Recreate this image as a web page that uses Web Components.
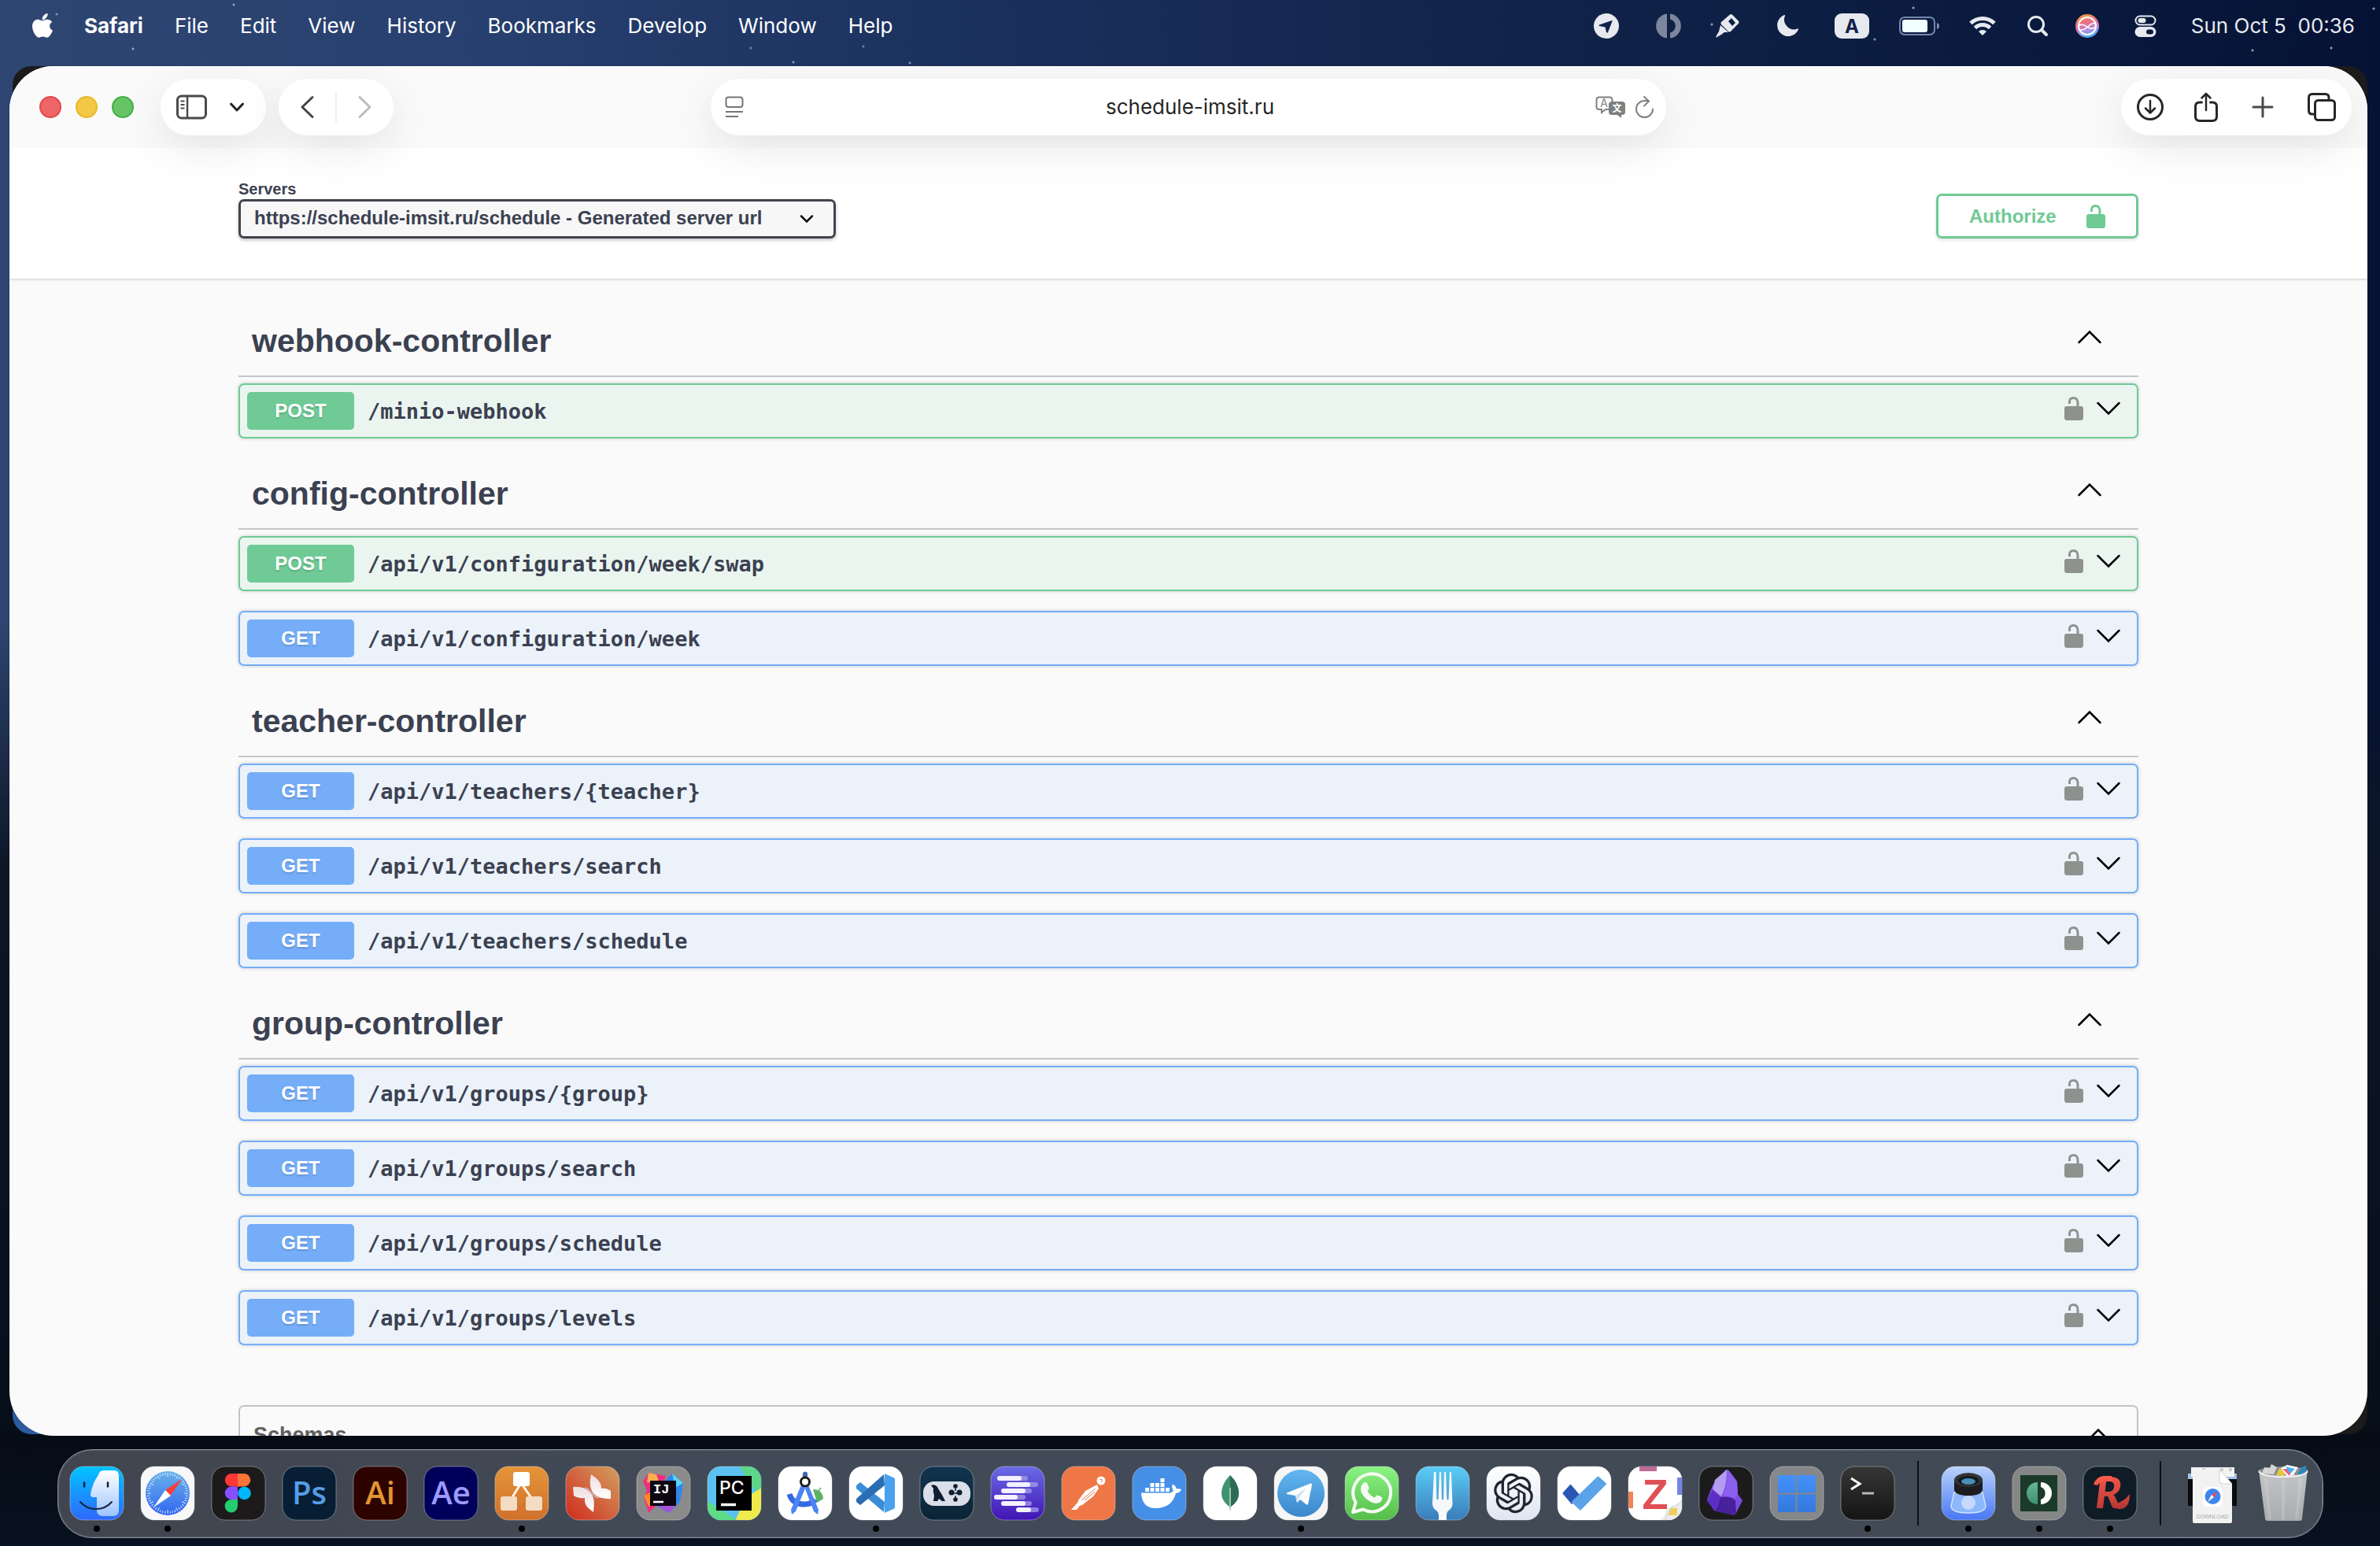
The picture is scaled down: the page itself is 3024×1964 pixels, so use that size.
<!DOCTYPE html>
<html lang="en">
<head>
<meta charset="utf-8">
<title>schedule-imsit.ru</title>
<style>
  html, body { margin: 0; height: 100%; }
  body { font-family: Inter, "Liberation Sans", sans-serif; overflow: hidden; }
</style>
</head>
<body>
<mac-desktop>
  <mac-menubar slot="menubar"></mac-menubar>
  <safari-window>
    <browser-toolbar slot="toolbar"></browser-toolbar>
    <swagger-servers></swagger-servers>
    <swagger-main>
      <api-section name="webhook-controller">
        <api-operation method="post" path="/minio-webhook"></api-operation>
      </api-section>
      <api-section name="config-controller">
        <api-operation method="post" path="/api/v1/configuration/week/swap"></api-operation>
        <api-operation method="get" path="/api/v1/configuration/week"></api-operation>
      </api-section>
      <api-section name="teacher-controller">
        <api-operation method="get" path="/api/v1/teachers/{teacher}"></api-operation>
        <api-operation method="get" path="/api/v1/teachers/search"></api-operation>
        <api-operation method="get" path="/api/v1/teachers/schedule"></api-operation>
      </api-section>
      <api-section name="group-controller">
        <api-operation method="get" path="/api/v1/groups/{group}"></api-operation>
        <api-operation method="get" path="/api/v1/groups/search"></api-operation>
        <api-operation method="get" path="/api/v1/groups/schedule"></api-operation>
        <api-operation method="get" path="/api/v1/groups/levels"></api-operation>
      </api-section>
      <schema-panel>Schemas</schema-panel>
    </swagger-main>
  </safari-window>
  <mac-dock slot="dock">
    <dock-item icon="finder" running></dock-item>
    <dock-item icon="safari" running></dock-item>
    <dock-item icon="figma"></dock-item>
    <dock-item icon="photoshop"></dock-item>
    <dock-item icon="illustrator"></dock-item>
    <dock-item icon="aftereffects"></dock-item>
    <dock-item icon="drawio" running></dock-item>
    <dock-item icon="ribbon"></dock-item>
    <dock-item icon="intellij"></dock-item>
    <dock-item icon="pycharm"></dock-item>
    <dock-item icon="androidstudio"></dock-item>
    <dock-item icon="vscode" running></dock-item>
    <dock-item icon="dbclient"></dock-item>
    <dock-item icon="bars"></dock-item>
    <dock-item icon="postman"></dock-item>
    <dock-item icon="docker"></dock-item>
    <dock-item icon="mongodb"></dock-item>
    <dock-item icon="telegram" running></dock-item>
    <dock-item icon="whatsapp"></dock-item>
    <dock-item icon="fork"></dock-item>
    <dock-item icon="chatgpt"></dock-item>
    <dock-item icon="todo"></dock-item>
    <dock-item icon="zotero"></dock-item>
    <dock-item icon="obsidian"></dock-item>
    <dock-item icon="windows"></dock-item>
    <dock-item icon="terminal" running></dock-item>
    <dock-separator></dock-separator>
    <dock-item icon="preview" running></dock-item>
    <dock-item icon="split" running></dock-item>
    <dock-item icon="redis" running></dock-item>
    <dock-separator></dock-separator>
    <dock-item icon="downloads"></dock-item>
    <dock-item icon="trash"></dock-item>
  </mac-dock>
</mac-desktop>

<script>
function define(name, render) {
  customElements.define(name, class extends HTMLElement {
    connectedCallback() {
      if (this.shadowRoot) return;
      this.attachShadow({ mode: "open" }).innerHTML = render(this);
    }
  });
}

const BUTTON_RESET = `button{appearance:none;border:0;background:none;padding:0;margin:0;font:inherit;color:inherit;display:block;cursor:pointer} svg{display:block;overflow:visible}`;

/* ---------- desktop ---------- */
define("mac-desktop", () => `
<style>
  :host{display:flex;flex-direction:column;height:100vh;overflow:hidden;
    background:
      radial-gradient(circle at 297px 6px,#8fa0c0 0 1px,transparent 2px),
      radial-gradient(circle at 72px 18px,#8090b5 0 1px,transparent 2px),
      radial-gradient(circle at 169px 62px,#93a3c4 0 1px,transparent 2px),
      radial-gradient(circle at 954px 61px,#6f82aa 0 1px,transparent 2px),
      radial-gradient(circle at 1097px 59px,#6f82aa 0 1px,transparent 2px),
      radial-gradient(circle at 1008px 79px,#8698bd 0 1px,transparent 2px),
      radial-gradient(circle at 1156px 80px,#7f90b5 0 1px,transparent 2px),
      radial-gradient(circle at 2175px 31px,#8c9cb8 0 1px,transparent 2px),
      radial-gradient(circle at 2431px 10px,#8c9cb8 0 1px,transparent 2px),
      radial-gradient(circle at 2382px 50px,#7f8fae 0 1px,transparent 2px),
      radial-gradient(circle at 2862px 64px,#8c9cb8 0 1px,transparent 2px),
      radial-gradient(circle at 2962px 61px,#8c9cb8 0 1px,transparent 2px),
      radial-gradient(circle at 3016px 11px,#8c9cb8 0 1px,transparent 2px),
      linear-gradient(180deg,transparent 0,transparent 92%,#060c16 93%,#081220 100%),
      linear-gradient(180deg,transparent 0,transparent 40%,#0c1626 56%,#070f1b 92%),
      linear-gradient(90deg,#2f4672 0,#284070 20%,#1b315e 40%,#12244b 62%,#0a1a3e 85%,#051236 100%)}
  main{flex:1;min-height:0;margin:18px 16px 0 12px;display:flex}
  footer{display:flex;justify-content:center;padding:17px 0 10px}
</style>
<slot name="menubar"></slot>
<main><slot></slot></main>
<footer><slot name="dock"></slot></footer>`);

/* ---------- menu bar ---------- */
define("mac-menubar", () => `
<style>
  :host{display:flex;justify-content:space-between;align-items:center;height:66px;padding:0 32px 0 41px;color:#fff;font-size:26px;line-height:32px}
  ${BUTTON_RESET}
  nav{display:flex;align-items:center;gap:40px}
  nav button:first-child + button{font-weight:700}
  .status{display:flex;align-items:center;gap:32px;color:#e6e9ee}
  time{white-space:pre}
</style>
<nav aria-label="Menu bar">
  <button aria-label="Apple"><svg width="26" height="32" viewBox="0 0 26 32" fill="#fff"><path d="M19.600 0c.2 2.300-.8 4.300-2 5.700-1.200 1.400-3.200 2.500-5 2.300-.2-2.200.9-4.300 2-5.500C15.900 1.100 18 .1 19.600 0zM25.200 10.900c-1.800 1.100-3.100 2.700-3.100 5 0 2.700 1.600 4.700 3.900 5.600-.6 1.900-1.500 3.700-2.700 5.400-1.300 1.900-2.600 3.800-4.700 3.800-2 0-2.700-1.200-5.100-1.200-2.400 0-3.200 1.200-5.100 1.200-2.100 0-3.600-2-4.900-3.900C.9 23.100-.7 17.500.3 13.400 1.300 9.700 4.200 7.800 7.100 7.800c2.200 0 4.100 1.400 5.700 1.400 1.500 0 3.700-1.600 6.200-1.500 2.400 0 4.700 1.100 6.200 3.200z"/></svg></button>
  <button>Safari</button><button>File</button><button>Edit</button><button>View</button><button>History</button><button>Bookmarks</button><button>Develop</button><button>Window</button><button>Help</button>
</nav>
<div class="status">
  <svg width="54" height="32" viewBox="-27 -16 54 32"><circle r="16" fill="#e6e9ee"/><path d="M7-7-9-1.500q-1 .8 0 1.500L-1.500 1.500 0 8q1 1 2 0L7.500-6Q7.800-7.500 7-7z" fill="#12224a"/></svg>
  <svg width="40" height="32" viewBox="-20 -16 40 32" fill="#7d869c"><path d="M-2-15.500a15.600 15.600 0 0 0 0 31zM2-15.500a15.600 15.600 0 0 1 0 31v-7a8.700 8.700 0 0 0 0-17z"/></svg>
  <svg width="46" height="32" viewBox="-23 -16 46 32" fill="#e6e9ee"><path fill-rule="evenodd" d="M3-14.500q1.500-1 3 .3l8 8q1.300 1.500 0 3L4 7q-1.500 1.200-3 0L-8-2q-1.200-1.500 0-3zM1-6l5 6 4-4-5-6zM-9-1 1 8-4 8-8 11-15 15-14 12-11 7-10 3z"/></svg>
  <svg width="42" height="32" viewBox="-21 -16 42 32" fill="#e6e9ee"><path d="M-4-14A14 14 0 1 0 14 4.500Q15 3 13 3.500A12.500 12.500 0 0 1-3-13Q-3-14.500-4-14z"/></svg>
  <svg width="58" height="32" viewBox="-29 -16 58 32"><rect x="-22" y="-16" width="44" height="32" rx="9" fill="#e6e9ee"/><text y="9" text-anchor="middle" font-size="24" font-weight="700" fill="#12224a">A</text></svg>
  <svg width="50" height="32" viewBox="-25 -16 50 32"><rect x="-25" y="-11" width="44" height="22" rx="6" fill="none" stroke="#7486ab" stroke-width="2"/><rect x="-22" y="-8" width="32" height="16" rx="3" fill="#f0ffff"/><path d="M22-4q3 1 3 4t-3 4z" fill="#8290b0"/></svg>
  <svg width="46" height="32" viewBox="-23 -16 46 32" fill="none" stroke="#e6e9ee" stroke-width="5"><path d="M-15-3.500a21.500 21.500 0 0 1 30 0M-9.500 2.500a13.500 13.500 0 0 1 19 0"/><path d="M0 12-5 7a7 7 0 0 1 10 0z" fill="#e6e9ee" stroke="none"/></svg>
  <svg width="30" height="32" viewBox="-15 -16 30 32" fill="none" stroke="#e6e9ee" stroke-width="3" stroke-linecap="round"><circle cx="-2" cy="-2" r="9.500"/><path d="m5 5 6 6" stroke-width="4"/></svg>
  <svg width="32" height="32" viewBox="-16 -16 32 32"><defs><linearGradient id="a" x1=".2" y1="0" x2=".5" y2="1"><stop stop-color="#f2a33a"/><stop offset=".4" stop-color="#ea6d88"/><stop offset=".7" stop-color="#b48ae0"/><stop offset="1" stop-color="#45b4f5"/></linearGradient></defs><circle r="15" fill="url(#a)"/><circle r="11" fill="none" stroke="#fff" stroke-width="2"/><path d="M-11 0C-6-5 0 2 4 3S11 1 11-1 7-5 3-1-6 7-10 4" fill="none" stroke="#fff" stroke-width="1.500"/></svg>
  <svg width="52" height="32" viewBox="-26 -16 52 32" fill="none" stroke="#e6e9ee" stroke-width="2"><rect x="-12.500" y="-12.500" width="25" height="11" rx="5.500"/><rect x="-9.500" y="-10" width="10" height="6" rx="3" fill="#e6e9ee" stroke="none"/><rect x="-12.500" y="2" width="25" height="11" rx="5.500" fill="#e6e9ee"/><rect x="1" y="4.500" width="9" height="6" rx="3" fill="#0a1a3e" stroke="none"/></svg>
  <time>Sun Oct 5  00:36</time>
</div>`);

/* ---------- browser window ---------- */
define("safari-window", () => `
<style>
  :host{position:relative;flex:1;min-width:0;display:flex}
  .back{position:absolute;inset:0 0 2px 4px;background:radial-gradient(circle at 0 100%,#2a5c9f 0 60px,transparent 61px),#1b1b1c;border-radius:24px}
  .window{position:relative;flex:1;min-width:0;display:flex;flex-direction:column;border-radius:56px;overflow:hidden;background:#fafafa;box-shadow:0 0 2px rgba(0,0,0,.4)}
  ::slotted([slot=toolbar]){position:relative;z-index:1}
</style>
<div class="back"></div>
<div class="window"><slot name="toolbar"></slot><slot></slot></div>`);

define("browser-toolbar", () => `
<style>
  :host{display:grid;grid-template-columns:1fr minmax(0,1214px) 1fr;align-items:center;height:104px;flex:none;background:#fafafa;padding:0 20px;box-sizing:border-box}
  ${BUTTON_RESET}
  .left{display:flex;align-items:center;gap:16px;padding:0 18px}
  .lights{display:flex;gap:18px;margin-right:18px}
  .lights button{width:28px;height:28px;border-radius:50%;border:2px solid #e3474b;background:#ed6566}
  .lights button:nth-child(2){background:#f3c845;border-color:#e9b929}
  .lights button:nth-child(3){background:#66c466;border-color:#44b048}
  .pill{display:flex;align-items:center;box-sizing:border-box;height:72px;border-radius:36px;background:#fff;box-shadow:0 16px 56px rgba(0,0,0,.09)}
  .sidebar{padding:0 28px 0 20px;gap:28px}
  .history{padding:0 28px;gap:27px}
  .history i{width:2px;height:40px;background:#efefef}
  .address{padding:0 16px 0 18px;gap:12px}
  .address input{flex:1;min-width:0;border:0;padding:0 0 0 52px;background:none;outline:0;text-align:center;font-family:inherit;font-size:26px;line-height:36px;color:#262626}
  .actions{justify-self:end;padding:0 20px;gap:39px}
</style>
<div class="left">
  <div class="lights"><button aria-label="Close"></button><button aria-label="Minimize"></button><button aria-label="Zoom"></button></div>
  <div class="pill sidebar">
    <button aria-label="Sidebar"><svg width="40" height="32" viewBox="0 0 40 32" fill="none" stroke="#4a4a4a" stroke-width="3"><rect x="1.500" y="2" width="36" height="28" rx="5"/><path d="M14 2v28" stroke-width="2.500"/><path d="M5.500 8.500h5M5.500 13h5M5.500 17.500h5" stroke-width="2"/></svg></button>
    <button aria-label="Tab groups"><svg width="18" height="12" viewBox="0 0 18 12" fill="none" stroke="#222" stroke-width="3" stroke-linecap="round" stroke-linejoin="round"><path d="m1.500 2 7.500 8 7.500-8"/></svg></button>
  </div>
  <div class="pill history">
    <button aria-label="Back"><svg width="17" height="28" viewBox="0 0 17 28" fill="none" stroke="#444" stroke-width="3" stroke-linecap="round" stroke-linejoin="round"><path d="M15 1.500 2 14l13 12.500"/></svg></button>
    <i></i>
    <button aria-label="Forward"><svg width="17" height="28" viewBox="0 0 17 28" fill="none" stroke="#bcbcbc" stroke-width="3" stroke-linecap="round" stroke-linejoin="round"><path d="m2 1.500 13 12.500L2 26.500"/></svg></button>
  </div>
</div>
<div class="pill address">
  <button aria-label="Page menu"><svg width="24" height="28" viewBox="0 0 24 28" fill="none" stroke="#777" stroke-width="2"><rect x="1.500" y="1.500" width="21" height="12.500" rx="3"/><path d="M1 20h22M1 26h16"/></svg></button>
  <input type="text" aria-label="Address" value="schedule-imsit.ru">
  <button aria-label="Translate"><svg width="39" height="28" viewBox="0 0 39 28"><path d="M5 1.500h13q3.500 0 3.500 3.500v6M17 17h-4l-5 4v-4H5q-3.500 0-3.500-3.500V5q0-3.500 3.500-3.500" fill="none" stroke="#808080" stroke-width="2"/><text x="11" y="14" font-size="14" text-anchor="middle" fill="#808080">A</text><path d="M21 7h13q4 0 4 4v9q0 4-4 4h-1v4l-5-4h-7q-4 0-4-4v-9q0-4 4-4z" fill="#808080"/><text x="27.500" y="20" font-size="12" font-weight="700" text-anchor="middle" fill="#fff" font-family="Noto Sans CJK SC">文</text></svg></button>
  <button aria-label="Reload"><svg width="23" height="28" viewBox="0 0 23 28" fill="none" stroke="#808080" stroke-width="2" stroke-linecap="round"><path d="M22 16.500a10.500 10.500 0 1 1-10.500-10.500h4M11 1l6 5.500-6 6"/></svg></button>
</div>
<div class="pill actions">
  <button aria-label="Downloads"><svg width="34" height="34" viewBox="0 0 34 34" fill="none" stroke="#262626" stroke-width="3" stroke-linecap="round" stroke-linejoin="round"><circle cx="17" cy="17" r="15.500"/><path d="M17 9v15M11 18.500l6 6 6-6" stroke-width="2.500"/></svg></button>
  <button aria-label="Share"><svg width="30" height="38" viewBox="0 0 30 38" fill="none" stroke="#262626" stroke-width="3" stroke-linecap="round" stroke-linejoin="round"><path d="M9.500 13H7q-5.500 0-5.500 5v13q0 5.500 5.500 5.500h16q5.500 0 5.500-5.500V18q0-5-5.500-5h-2.500"/><path d="M15 23V2M9.500 7.500 15 2l5.500 5.500" stroke-width="2.500"/></svg></button>
  <button aria-label="New tab"><svg width="36" height="28" viewBox="-18 -14 36 28" stroke="#4a4a4a" stroke-width="3" stroke-linecap="round"><path d="M-12 0h24M0-12v24"/></svg></button>
  <button aria-label="Tab overview"><svg width="36" height="36" viewBox="0 0 36 36" fill="none" stroke="#262626" stroke-width="3"><path d="M9 27H6q-4.500 0-4.500-4.500V6q0-4.500 4.500-4.500h16.500q4.500 0 4.500 4.500v3"/><rect x="9.500" y="9.500" width="25" height="25" rx="4"/></svg></button>
</div>`);

/* ---------- swagger page ---------- */
const UNLOCK = `<svg width="24" height="30" viewBox="0 0 24 30" fill="currentColor"><path d="M3 12h12.500V7.500q0-4.500-4-4.500T8 7v2H5V7q0-7 6.500-7t7 7.500V12H21q3 0 3 3v11.500q0 3.500-3.500 3.500h-17Q0 30 0 26.500V15q0-3 3-3z"/></svg>`;
const CHEVRON_UP = `<svg width="30" height="16" viewBox="0 0 30 16" fill="none" stroke="#000" stroke-width="2.500" stroke-linecap="round"><path d="m1.500 15 13.500-13.500 13.500 13.500"/></svg>`;
const CHEVRON_DOWN = `<svg width="30" height="16" viewBox="0 0 30 16" fill="none" stroke="#000" stroke-width="2.500" stroke-linecap="round"><path d="m1.500 1 13.500 13.500 13.500-13.500"/></svg>`;

define("swagger-servers", () => `
<style>
  :host{display:block;flex:none;background:#fff;box-shadow:0 1px 3px rgba(0,0,0,.2);font-family:"Liberation Sans",Arial,sans-serif;color:#3b4151;font-weight:700}
  ${BUTTON_RESET}
  .wrap{display:flex;justify-content:space-between;align-items:flex-end;box-sizing:border-box;max-width:2482px;margin:0 auto;padding:40px 34px 51px}
  label{display:block;font-size:20px;line-height:25px}
  .field{display:grid}
  .field select,.field svg{grid-area:1/1}
  .field svg{align-self:center;justify-self:end;margin-right:28px;pointer-events:none}
  select{appearance:none;box-sizing:border-box;width:759px;height:50px;border:3px solid #41444e;border-radius:7px;background:#f7f7f7;padding:0 60px 2px 17px;font:700 24px/40px "Liberation Sans",Arial,sans-serif;color:#3b4151;box-shadow:0 2px 4px rgba(0,0,0,.25)}
  .authorize{display:flex;align-items:center;justify-content:space-between;box-sizing:border-box;width:257px;height:57px;padding:0 39px;border:3px solid #6fca95;border-radius:7px;color:#6fca95;font-size:24px;line-height:30px;box-shadow:0 2px 4px rgba(0,0,0,.12)}
</style>
<div class="wrap">
  <div>
    <label for="servers">Servers</label>
    <div class="field">
      <select id="servers"><option>https://schedule-imsit.ru/schedule - Generated server url</option></select>
      <svg width="18" height="10" viewBox="0 0 18 10" fill="none" stroke="#111" stroke-width="2.500" stroke-linecap="round"><path d="m2 1.500 7 7 7-7"/></svg>
    </div>
  </div>
  <button class="authorize"><span>Authorize</span>${UNLOCK}</button>
</div>`);

define("swagger-main", () => `
<style>
  :host{display:block;flex:1 0 auto;width:100%;box-sizing:border-box;max-width:2482px;margin:0 auto;padding:34px 34px 0;font-family:"Liberation Sans",Arial,sans-serif;color:#3b4151}
</style><slot></slot>`);

define("api-section", el => `
<style>
  :host{display:block}
  ${BUTTON_RESET}
  header{display:flex;align-items:center;justify-content:space-between;box-sizing:border-box;height:91px;padding:0 47px 0 17px;border-bottom:2px solid #c4c6cb}
  h3{margin:0;font-size:41px;line-height:48px;font-weight:700}
  header button{padding-bottom:10px}
  .ops{padding-top:8px}
</style>
<header><h3>${el.getAttribute("name")}</h3><button aria-label="Collapse">${CHEVRON_UP}</button></header>
<div class="ops"><slot></slot></div>`);

define("api-operation", el => {
  const method = el.getAttribute("method");
  const [line, fill] = method === "post" ? ["#6fca95", "#ebf5f0"] : ["#75adf8", "#ebf2fa"];
  return `
<style>
  :host{display:flex;align-items:center;box-sizing:border-box;height:70px;margin-bottom:25px;padding:0 21px 0 9px;border:2px solid ${line};border-radius:7px;background:${fill};box-shadow:0 0 5px rgba(0,0,0,.19)}
  ${BUTTON_RESET}
  .method{width:136px;border-radius:5px;background:${line};color:#fff;font-weight:700;font-size:24px;line-height:48px;text-align:center;text-shadow:0 2px 2px rgba(0,0,0,.15)}
  .path{flex:1;margin-left:17px;padding-top:2px;font:700 27px/32px "DejaVu Sans Mono","Liberation Mono",monospace}
  .lock{color:#8e928f}
  .tools{display:flex;align-items:center;gap:17px;padding-bottom:6px}
</style>
<span class="method">${method.toUpperCase()}</span>
<span class="path">${el.getAttribute("path")}</span>
<span class="tools"><button class="lock" aria-label="Authorization">${UNLOCK}</button><button aria-label="Expand">${CHEVRON_DOWN}</button></span>`;
});

define("schema-panel", () => `
<style>
  :host{display:flex;justify-content:space-between;align-items:flex-start;margin-top:76px;padding:20px 34px 20px 17px;border:2px solid #c2c3ca;border-radius:7px;color:#606060}
  ${BUTTON_RESET}
  h4{margin:0;font-size:27px;line-height:32px}
  button{margin-top:8px}
</style>
<h4><slot></slot></h4><button aria-label="Collapse schemas">${CHEVRON_UP}</button>`);

/* ---------- dock ---------- */
const grad = (id, a, b, diag) => `<linearGradient id="${id}" x1="${diag ? 1 : 0}" y1="0" x2="0" y2="1"><stop stop-color="${a}"/><stop offset="1" stop-color="${b}"/></linearGradient>`;
const tile = fill => `<rect x="1" y="1" width="68" height="68" rx="17" fill="${fill}" stroke="#fff" stroke-opacity=".35"/>`;
const clip = `<clipPath id="c"><rect x="1" y="1" width="68" height="68" rx="17"/></clipPath>`;
const adobe = (bg, fg, t) => tile(bg) + `<text x="35" y="49" text-anchor="middle" font-family="Open Sans" font-weight="600" font-size="40" fill="${fg}">${t}</text>`;
const ticks = Array.from({ length: 48 }, (_, i) => `<path d="M0-26v${i % 4 ? 3 : 5}" transform="rotate(${i * 7.5})"/>`).join("");

const ICONS = {
  finder: `<defs>${clip}${grad("g", "#00c4ff", "#2f68fb")}${grad("w", "#ffffff", "#9cc4ff")}</defs>${tile("url(#g)")}
    <path d="M37 12q1-6 7-6h13q6 0 6 7v44q0 7-7 7H43q-8 0-8-8V40h-5q-3 0-3-4 3-15 10-24z" fill="url(#w)"/>
    <path d="M19 21.500v5M49 21.500v5" stroke="#123" stroke-width="2.500" stroke-linecap="round"/><path d="M14 46q8 9 20 9t20-9" fill="none" stroke="#14233f" stroke-width="2" stroke-linecap="round"/>`,
  safari: `<defs>${grad("g", "#68b3ea", "#3366f0")}</defs>${tile("#f8f8f8")}<g transform="translate(35 35)"><circle r="28" fill="url(#g)"/><g stroke="#d5e6ff" stroke-width="1">${ticks}</g><path d="M18-18 4 3-3-4z" fill="#f5403c"/><path d="M-18 18-3-4 4 3z" fill="#fff"/></g>`,
  figma: `${tile("#1c1a1a")}<path d="M34 10v16.500h-8a8 8 0 0 1 0-16.500z" fill="#ff3737"/><path d="M34 10h8a8 8 0 0 1 0 16.500h-8z" fill="#ff7237"/><path d="M34 26.500V43h-8a8 8 0 0 1 0-16.500z" fill="#874fff"/><circle cx="42.500" cy="35" r="8.300" fill="#00b6ff"/><path d="M34 43v8.500A8.200 8.200 0 1 1 26 43z" fill="#24cb71"/>`,
  photoshop: adobe("#071e34", "#549ee8", "Ps"),
  illustrator: adobe("#2d0300", "#e29534", "Ai"),
  aftereffects: adobe("#00005b", "#9d9aff", "Ae"),
  drawio: `<defs>${grad("g", "#e59438", "#d0702c")}</defs>${tile("url(#g)")}<path d="M34 22 18 48M34 22l18 26" stroke="#fdf4ea" stroke-width="3"/><rect x="24" y="8" width="21" height="18" rx="3" fill="#fff"/><rect x="8" y="39" width="21" height="18" rx="3" fill="#f3dcc3"/><rect x="40" y="39" width="21" height="18" rx="3" fill="#f3dcc3"/>`,
  ribbon: `<defs>${grad("g", "#d3a060", "#d02a1e", 1)}${grad("w", "#eedde0", "#fff")}</defs>${tile("url(#g)")}<path d="M33 11c7 5 13 9 13 18 4-1 8 0 12 3v10c-9 0-17-1-22-7s-5-15-3-24z" fill="url(#w)"/><path d="M10 27c10-1 18 2 23 8s4 15 3 24c-6-5-12-8-11-18-5 1-11-1-14-3z" fill="url(#w)"/><path d="M34 34q2 5 8 7M34 36q-3-6-9-8" stroke="#cdaeb4" stroke-width="2" fill="none"/>`,
  intellij: `${tile("#8b8b8c")}<path d="m16 9 22 4-10 36-12 11-6-20 4-8-5-12z" fill="#f0307c"/><path d="m16 9 10 2 4 12-16-2z" fill="#f6b04c"/><path d="m10 38 8-4 6 14-8 4z" fill="#ff8a22"/><path d="m46 10 14 12-4 24-14 14-18-10 4-22z" fill="#2f86f0"/><path d="m46 10 14 12-10 6z" fill="#56d6f5"/><path d="m26 50 16 10 8-9z" fill="#a652d9"/><rect x="18" y="19" width="33" height="32" fill="#0d0712"/><text x="22" y="35" font-size="17" font-weight="700" fill="#fff" font-family="Liberation Mono">IJ</text><path d="M22 46h13" stroke="#fff" stroke-width="2.500"/>`,
  pycharm: `<defs>${clip}</defs>${tile("#5ac1f0")}<g clip-path="url(#c)"><path d="M42 0h28v40L52 20z" fill="#5dd68a"/><path d="M70 28v42H36L50 40z" fill="#f0ea4c"/><path d="M0 44 40 70H0z" fill="#5ddb86"/></g><rect x="12" y="13" width="45" height="44" fill="#000"/><text x="16" y="36" font-size="23" fill="#fff" font-weight="500">PC</text><path d="M18 49.500h19" stroke="#fff" stroke-width="3.500"/>`,
  androidstudio: `${tile("#fff")}<path d="M45 30q12 0 13 12l-8 5z" fill="#5bb35f"/><path d="M52 32l3-4" stroke="#5bb35f" stroke-width="1.500"/><path d="M15 36q4 13 19 13 9 0 14-6" fill="none" stroke="#3569e0" stroke-width="7"/><path d="m31 22-14 34 1 6 5-4 14-34zM38 22l14 34-1 6-5-4-13-34z" fill="#4c84f4"/><path d="M32 9q3-3 6 0v9h-6z" fill="#3f66b8"/><circle cx="35" cy="20.500" r="5.500" fill="#fff" stroke="#1b1b1b" stroke-width="3"/>`,
  vscode: `${tile("#fff")}<path d="M45 59 10 29v-4l5-4L46 46z" fill="#3a8cd8"/><path d="M45 11 10 42v4l5 4 31-25z" fill="#2a6db4"/><path d="m46 10 13 6v38l-13 6V10z" fill="#49a0ee"/>`,
  dbclient: `<defs>${grad("g", "#12344f", "#0b2336")}</defs>${tile("url(#g)")}<rect x="5" y="20" width="60" height="31" rx="14" fill="#d9dee9"/><path d="M15 25q5-2 8 2 2 4 6 10l4 8h-4l-4-3-2 3h-5l1-7q-2-5-1-9z" fill="#0f1f30"/><path d="M46 26v6M42 35h8M46 38v6" stroke="#0f1f30" stroke-width="1.500"/><g fill="#0f1f30"><circle cx="46" cy="26" r="2.800"/><circle cx="41" cy="34" r="3.500"/><circle cx="51" cy="34" r="3.500"/><circle cx="46" cy="43" r="2.800"/></g>`,
  bars: `<defs>${grad("g", "#6a6be6", "#4114b4")}</defs>${tile("url(#g)")}<g fill="#a9a2ea" fill-opacity=".7"><rect x="20" y="13" width="28" height="6" rx="3"/><rect x="30" y="21" width="31" height="6" rx="3"/><rect x="24" y="29" width="29" height="6" rx="3"/><rect x="15" y="37" width="30" height="6" rx="3"/><rect x="24" y="45" width="29" height="6" rx="3"/><rect x="40" y="53" width="22" height="6" rx="3"/></g><g fill="#f3f0ff"><rect x="9" y="13" width="31" height="6" rx="3"/><rect x="21" y="21" width="30" height="6" rx="3"/><rect x="14" y="29" width="31" height="6" rx="3"/><rect x="5" y="37" width="30" height="6" rx="3"/><rect x="14" y="45" width="31" height="6" rx="3"/><rect x="33" y="53" width="19" height="6" rx="3"/></g>`,
  postman: `${tile("#ef7646")}<circle cx="51" cy="19" r="5.500" fill="#fff"/><path d="M46 24 31 32 22 44l-2 8 7-2 14-11 7-10z" fill="#fff"/><path d="m21 47-8 9h7l6-8z" fill="#fff"/><path d="m26 44 18-15M30 44l13-11M49 18l3-1v4" stroke="#ef7646" stroke-width="1" fill="none"/>`,
  docker: `${tile("#458fe7")}<g fill="#fff"><rect x="17" y="28" width="5" height="5"/><rect x="23.500" y="28" width="5" height="5"/><rect x="30" y="28" width="5" height="5"/><rect x="36.500" y="28" width="5" height="5"/><rect x="43" y="28" width="5" height="5"/><rect x="23.500" y="22" width="5" height="5"/><rect x="30" y="22" width="5" height="5"/><rect x="36.500" y="22" width="5" height="5"/><rect x="36.500" y="16" width="5" height="5"/><path d="M12 34.500h37q3-1 4-3-3-4-1-8 4 2 5 6 4-1 6 1-2 4-7 4.500Q51 54 30 54 13 54 12 34.500z"/></g>`,
  mongodb: `${tile("#fff")}<path d="M35 12q11 11 11 23 0 10-10 17l-1 6-1-6q-10-7-10-17 0-12 11-23z" fill="#3f9270"/><path d="M35 12q11 11 11 23 0 10-10 17z" fill="#2d6b53"/><path d="M35 28v28" stroke="#b9d8c8" stroke-width="1.500"/>`,
  telegram: `<defs>${grad("g", "#63b7f0", "#3a86ca")}</defs>${tile("#f6f6f6")}<circle cx="35" cy="35" r="30" fill="url(#g)"/><path d="M17 34.500 47 22.500q2-.5 2 1.500l-5 25q-1 1.500-2.500 0L34 43l-4 4-2-9-11-2q-1-.8 0-1.500z" fill="#fff"/><path d="m28 38 14-10-9 12-3 7z" fill="#cfe1f3"/>`,
  whatsapp: `<defs>${grad("g", "#8af383", "#55bd4a")}</defs>${tile("url(#g)")}<path d="m11 59 3.500-12.500A24 24 0 1 1 24 55.500z" fill="none" stroke="#f5fbf4" stroke-width="4" stroke-linejoin="round"/><path d="M24 22q3-2 5 0l2.500 6q.5 1.500-2 4 3 6 9 8.500l3-3q1.500-.5 7 3-1 7-8 7.500-9-1-16-9.500T24 22z" fill="#f5fbf4"/>`,
  fork: `<defs>${grad("g", "#5bcdf8", "#3a7cba")}</defs>${tile("url(#g)")}<path d="M24 8h2.500l1 35h2L31 8h2l1 35h2L37 8h2l1.500 35h2L44 8h2l1.500 40q0 6-5 9-2.500 2-2.500 5v7H30v-7q0-3-3-5-5-3-5-9z" fill="#f6f8fa"/>`,
  chatgpt: `<defs>${grad("g", "#fff", "#dfe5f1")}</defs>${tile("url(#g)")}<path transform="translate(9.800 9.800) scale(2.100)" fill="#1f2430" d="M22.2819 9.8211a5.9847 5.9847 0 0 0-.5157-4.9108 6.0462 6.0462 0 0 0-6.5098-2.9A6.0651 6.0651 0 0 0 4.9807 4.1818a5.9847 5.9847 0 0 0-3.9977 2.9 6.0462 6.0462 0 0 0 .7427 7.0966 5.98 5.98 0 0 0 .511 4.9107 6.051 6.051 0 0 0 6.5146 2.9001A5.9847 5.9847 0 0 0 13.2599 24a6.0557 6.0557 0 0 0 5.7718-4.2058 5.9894 5.9894 0 0 0 3.9977-2.9001 6.0557 6.0557 0 0 0-.7475-7.0729zm-9.022 12.6081a4.4755 4.4755 0 0 1-2.8764-1.0408l.1419-.0804 4.7783-2.7582a.7948.7948 0 0 0 .3927-.6813v-6.7369l2.02 1.1686a.071.071 0 0 1 .038.052v5.5826a4.504 4.504 0 0 1-4.4945 4.4944zm-9.6607-4.1254a4.4708 4.4708 0 0 1-.5346-3.0137l.142.0852 4.783 2.7582a.7712.7712 0 0 0 .7806 0l5.8428-3.3685v2.3324a.0804.0804 0 0 1-.0332.0615L9.74 19.9502a4.4992 4.4992 0 0 1-6.1408-1.6464zM2.3408 7.8956a4.485 4.485 0 0 1 2.3655-1.9728V11.6a.7664.7664 0 0 0 .3879.6765l5.8144 3.3543-2.0201 1.1685a.0757.0757 0 0 1-.071 0l-4.8303-2.7865A4.504 4.504 0 0 1 2.3408 7.872zm16.5963 3.8558L13.1038 8.364 15.1192 7.2a.0757.0757 0 0 1 .071 0l4.8303 2.7913a4.4944 4.4944 0 0 1-.6765 8.1042v-5.6772a.79.79 0 0 0-.407-.667zm2.0107-3.0231l-.142-.0852-4.7735-2.7818a.7759.7759 0 0 0-.7854 0L9.409 9.2297V6.8974a.0662.0662 0 0 1 .0284-.0615l4.8303-2.7866a4.4992 4.4992 0 0 1 6.6802 4.66zM8.3065 12.863l-2.02-1.1638a.0804.0804 0 0 1-.038-.0567V6.0742a4.4992 4.4992 0 0 1 7.3757-3.4537l-.142.0805L8.704 5.459a.7948.7948 0 0 0-.3927.6813zm1.0976-2.3654l2.602-1.4998 2.6069 1.4998v2.9994l-2.5974 1.4997-2.6067-1.4997Z"/>`,
  todo: `${tile("#fff")}<path d="m18 24 12 14-11 11-11-13q-1-1 0-2l9-10q.5-.5 1 0z" fill="#2b57b4"/><path d="m18.500 46 33-32q1-1 2 0l9 8q1 1 0 2L31 56q-1 1-2 0z" fill="#5ca2e8"/>`,
  zotero: `<defs>${clip}</defs>${tile("#fff")}<g clip-path="url(#c)"><rect x="15" y="0" width="22" height="7" fill="#bf6b98"/><rect x="0" y="33" width="7" height="21" fill="#ee8559"/><rect x="63" y="15" width="7" height="22" fill="#7485e6"/><path d="M70 44q-8 6-20 10-2 10-9 16h29z" fill="#ececec"/><path d="M54 54h9v9H52z" fill="#efcf5a"/><path d="M70 42q-4 8-14 11-5 6-9 17" fill="none" stroke="#cfcfcf"/></g><text x="35" y="55" font-size="54" font-weight="700" font-family="Liberation Sans" text-anchor="middle" fill="#df4f54">Z</text>`,
  obsidian: `${tile("#1c1b1c")}<path d="M36 5q3 1 4 3l9 12 1 16 6 8-8 16q-3 3-6 2L20 57 11 43l7-18L34 6z" fill="#7c4ce0"/><path d="M36 5 21 18l-3 12 11 9q7-12 7-34z" fill="#b49cf0"/><path d="M18 30 11 45l10 12q7-9 6-18z" fill="#5c2fc4"/><path d="M27 40q14-2 20 4l1 16-6 2-21-5q6-7 6-17z" fill="#47209c"/><path d="M36 5q3 1 4 3l9 12 1 16-4 6q-6-4-15-3 6-14 5-34z" fill="#8b5ff0"/>`,
  windows: `<defs>${grad("g", "#4491fb", "#3478dc")}</defs>${tile("#868788")}<path d="M11 12h22.500v22.500H11zM35.500 12H59v22.500H35.500zM11 36.500h22.500V59H11zM35.500 36.500H59V59H35.500z" fill="url(#g)"/>`,
  terminal: `<defs>${grad("g", "#363636", "#141414")}</defs>${tile("url(#g)")}<path d="m14 16 11 7-11 7" fill="none" stroke="#fff" stroke-width="3"/><path d="M28 35h15" stroke="#b9b9b9" stroke-width="3"/>`,
  preview: `<defs>${grad("g", "#b9d2fb", "#4878f4")}</defs>${tile("url(#g)")}<path d="M17 34h36l4 17q0 9-22 9t-22-9z" fill="#8db8fb" stroke="#cfe2ff" stroke-width="1.500"/><circle cx="35" cy="47" r="9" fill="#c4d9fb"/><path d="M17 18v13q2 7 18 7t18-7V18z" fill="#1d1d1f"/><ellipse cx="35" cy="18" rx="18" ry="9" fill="#353536"/><ellipse cx="35" cy="19" rx="13" ry="6" fill="#0e1a22"/><ellipse cx="35" cy="20" rx="9" ry="4" fill="#4a8fb5"/>`,
  split: `<defs>${grad("g", "#65b795", "#3f8f72")}</defs>${tile("#858686")}<rect x="11" y="12" width="47" height="46" fill="#1b3a2a"/><path d="M33 21v28a14 14 0 0 1 0-28z" fill="url(#g)"/><path d="M37 21a14 14 0 0 1 0 28v-6a8.500 8.500 0 0 0 0-16z" fill="#fff"/>`,
  redis: `<defs>${grad("g", "#ff5f4c", "#b23434")}</defs>${tile("#0f1b26")}<text x="33" y="54" font-size="56" font-weight="900" font-style="italic" font-family="Lato" text-anchor="middle" fill="url(#g)">R</text><path d="M14 24q3-10 13-11h10v7H29q-7 0-10 5zM40 46q3 3 8 0 7-3 12-10 0 20-14 19-7-1-10-6z" fill="url(#g)"/>`,
  downloads: `<rect x="6" y="12" width="62" height="39" fill="#0a0c12"/><rect x="6" y="10" width="62" height="7" fill="#9fc2e6"/><rect x="10" y="2" width="55" height="12" fill="#f3f3f3"/><path d="M24 3h4v4h-4zM47 3h4v4h-4zM58 3h4v4h-4z" fill="#ccc"/><path d="M12 5h34l16 18v48q0 2-2 2H14q-2 0-2-2z" fill="#f2f2f2"/><path d="M46 5v14q0 4 4 4h12z" fill="#fff" stroke="#d0d0d0"/><rect x="25" y="27" width="25" height="25" rx="6" fill="#fff"/><circle cx="37.500" cy="39" r="10" fill="#3f86ee"/><path d="m44 33-5 7-3-3z" fill="#f44"/><path d="m31 46 5-9 3 3z" fill="#fff"/><text x="37" y="67" font-size="7" text-anchor="middle" fill="#a8a8a8" font-family="Liberation Sans">DOWNLOAD</text>`,
  trash: `<defs>${grad("g", "#c4c6c8", "#a9abad")}</defs><path d="M6 5h62l-7 62q0 3-3 3H17q-3 0-3-3z" fill="url(#g)"/><ellipse cx="37" cy="7" rx="31" ry="6" fill="#8c8e90"/><path d="m10 10 3-8 7 1 2-5 7 4-4 9z" fill="#d5d5d5"/><path d="m28 12 4-9 8 4-2 6z" fill="#e6c739"/><path d="m34 3 8-4 14 3-6 10-8 2z" fill="#fff"/><path d="m36 4 9 9 4-9z" fill="#ee5e8a"/><path d="m40 1 12 3-6 6z" fill="#3fb7ee"/><path d="m55 11 5-9 6-2 1 9-6 4z" fill="#2e86b7"/><path d="M6 7q4 7 31 7t31-7" fill="none" stroke="#eee" stroke-width="2.500"/><path d="M15 16l5 52M59 16l-5 52M37 18v50" stroke="#fff" stroke-opacity=".15" stroke-width="4"/>`
};

define("mac-dock", () => `
<style>
  :host{display:flex;align-items:center;gap:20px;padding:20px 17px 21px 14px;border:1px solid #8a919b;border-radius:44px;background:linear-gradient(90deg,#41454f,#414a57 30%,#414a54);box-shadow:inset 0 0 2px #8a919b}
</style><slot></slot>`);

define("dock-separator", () => `<style>:host{display:block;width:2px;height:82px;margin:-6px 8px;background:#0b101a}</style>`);

define("dock-item", el => `
<style>
  :host{display:block;position:relative}
  ${BUTTON_RESET}
  i{position:absolute;left:0;right:0;bottom:-14px;margin:auto;width:8px;height:8px;border-radius:50%;background:#000}
</style>
<button aria-label="${el.getAttribute("icon")}"><svg width="70" height="70" viewBox="0 0 70 70">${ICONS[el.getAttribute("icon")]}</svg></button>${el.hasAttribute("running") ? "<i></i>" : ""}`);
</script>
</body>
</html>
